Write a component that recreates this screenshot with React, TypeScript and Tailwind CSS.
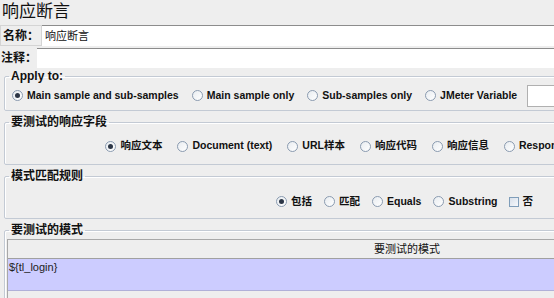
import React from "react";

const cjk = "font-['Liberation_Sans','Noto_Sans_CJK_SC',sans-serif]";

function Radio({ checked, label }: { checked?: boolean; label: string }) {
  return (
    <label className="flex items-center gap-[4px]">
      <span className="flex h-[11px] w-[11px] items-center justify-center rounded-full border border-[#8a9bb0] bg-gradient-to-br from-[#e8ecf0] to-[#ffffff]">
        {checked && <span className="h-[5px] w-[5px] rounded-full bg-[#2c3646]" />}
      </span>
      <span className="whitespace-nowrap">{label}</span>
    </label>
  );
}

function Check({ label }: { label: string }) {
  return (
    <label className="flex items-center gap-[3px]">
      <span className="h-[10px] w-[10px] border border-[#7f9db9] bg-gradient-to-br from-[#d8e0ea] to-[#f6f8fb]" />
      <span className="whitespace-nowrap">{label}</span>
    </label>
  );
}

function Group({ title, children }: { title: string; children: React.ReactNode }) {
  return (
    <fieldset className="mx-[4px] rounded-[2px] border border-[#c3cad4] shadow-[inset_1px_1px_0_#ffffff]">
      <legend className="ml-[4px] px-[2px] text-[12px] font-bold leading-[14px] text-[#111]">
        {title}
      </legend>
      {children}
    </fieldset>
  );
}

export default function App() {
  return (
    <div className={`h-[298px] w-[554px] overflow-hidden bg-[#eeeeee] text-[#111] ${cjk}`}>
      <div className="w-[814px]">
        <div className="pl-[2px] text-[17px] leading-[24px]">响应断言</div>

        <div className="mt-[1px] flex h-[21px]">
          <div className="flex w-[42px] items-center border border-[#d4d4d4] pl-[2px] text-[12px] font-bold">
            名称：
          </div>
          <div className="flex flex-1 items-center border-t border-[#8c8c8c] bg-white pl-[3px] text-[11px]">
            响应断言
          </div>
        </div>

        <div className="mt-[2px] flex h-[20px]">
          <div className="flex w-[37px] items-center pl-[1px] text-[12px] font-bold">注释：</div>
          <div className="flex-1 border-t border-[#8c8c8c] bg-white" />
        </div>

        <div className="mt-[1px] flex flex-col gap-[4px] text-[10.5px] font-bold">
          <Group title="Apply to:">
            <div className="flex h-[27px] items-center gap-[13px] pl-[7px] pb-[2px]">
              <Radio checked label="Main sample and sub-samples" />
              <Radio label="Main sample only" />
              <Radio label="Sub-samples only" />
              <Radio label="JMeter Variable" />
              <div className="ml-[-3px] h-[22px] w-[120px] border border-[#b0b0b0] bg-white" />
            </div>
          </Group>

          <Group title="要测试的响应字段">
            <div className="flex h-[35px] items-center justify-center gap-[15px] pb-[1px]">
              <Radio checked label="响应文本" />
              <Radio label="Document (text)" />
              <Radio label="URL样本" />
              <Radio label="响应代码" />
              <Radio label="响应信息" />
              <Radio label="Response Headers" />
              <Check label="Ignore Status" />
            </div>
          </Group>

          <Group title="模式匹配规则">
            <div className="flex h-[35px] items-center justify-center gap-[12px] pt-[2px] pr-[5px]">
              <Radio checked label="包括" />
              <Radio label="匹配" />
              <Radio label="Equals" />
              <Radio label="Substring" />
              <Check label="否" />
            </div>
          </Group>

          <Group title="要测试的模式">
            <div className="mx-[2px] mt-[2px] border border-[#a8a8a8] font-normal">
              <div className="flex h-[19px] items-center justify-center border-b border-[#a0a0a0] bg-[#eeeeee] text-[11px]">
                要测试的模式
              </div>
              <div className="h-[31px] bg-[#ccccff] pl-[1px] pt-[2px] text-[11px] leading-[13px] text-[#222]">
                {"${tl_login}"}
              </div>
              <div className="h-[20px] border-t border-[#b0b0d8] bg-[#eeeeee]" />
            </div>
          </Group>
        </div>
      </div>
    </div>
  );
}
